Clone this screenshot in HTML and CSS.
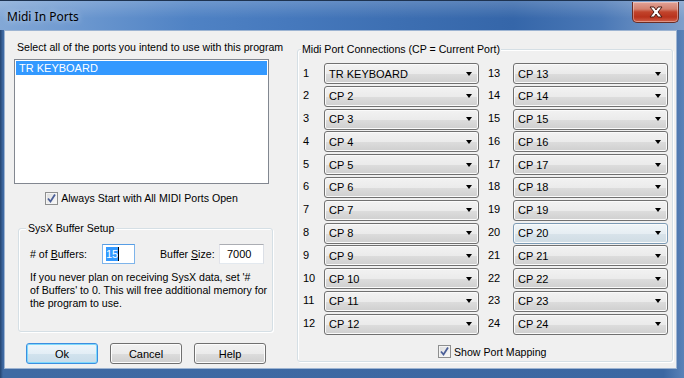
FILE: index.html
```html
<!DOCTYPE html>
<html lang="en">
<head>
  <meta charset="UTF-8" />
  <title>Midi In Ports</title>
  <link rel="stylesheet" href="styles.css">
</head>
<body>

  <div class="window">
    <div class="titlebar">
      <span class="title">Midi In Ports</span>
      <div class="close-btn">
        <svg width="16" height="12" viewBox="0 0 16 12">
          <path d="M2 1h4l2 3 2-3h4l-4 5 4 5h-4l-2-3-2 3H2l4-5z" fill="#fff" stroke="#4a1a12" stroke-width="1" stroke-linejoin="round"/>
        </svg>
      </div>
    </div>

    <div class="client">
      <div class="left-col">
        <div class="hint">Select all of the ports you intend to use with this program</div>
        <div class="listbox">
          <div class="list-item selected">TR KEYBOARD</div>
        </div>
        <div class="check-row">
          <span class="checkbox"><svg width="13" height="13" viewBox="0 0 13 13"><path d="M3 6.5l2.5 3L10 2.5" fill="none" stroke="#4b5f98" stroke-width="1.8"/></svg></span>
          <span>Always Start with All MIDI Ports Open</span>
        </div>

        <div class="group sysx">
          <div class="group-title">SysX Buffer Setup</div>
          <div class="buf-row">
            <span class="buf-label"># of <u>B</u>uffers:</span>
            <span class="textbox focused narrow"><span class="sel">15</span><span class="caret"></span></span>
            <span class="buf-label size-label">Buffer <u>S</u>ize:</span>
            <span class="textbox wide">7000</span>
          </div>
          <p class="note">If you never plan on receiving SysX data, set '#<br>of Buffers' to 0. This will free additional memory for<br>the program to use.</p>
        </div>

        <div class="buttons">
          <button class="default">Ok</button>
          <button>Cancel</button>
          <button>Help</button>
        </div>
      </div>

      <div class="group ports-group">
        <div class="group-title">Midi Port Connections (CP = Current Port)</div>
        <div class="ports">
          <div class="port-col">
            <div class="port"><span class="num">1</span><div class="combo">TR KEYBOARD</div></div>
            <div class="port"><span class="num">2</span><div class="combo">CP 2</div></div>
            <div class="port"><span class="num">3</span><div class="combo">CP 3</div></div>
            <div class="port"><span class="num">4</span><div class="combo">CP 4</div></div>
            <div class="port"><span class="num">5</span><div class="combo">CP 5</div></div>
            <div class="port"><span class="num">6</span><div class="combo">CP 6</div></div>
            <div class="port"><span class="num">7</span><div class="combo">CP 7</div></div>
            <div class="port"><span class="num">8</span><div class="combo">CP 8</div></div>
            <div class="port"><span class="num">9</span><div class="combo">CP 9</div></div>
            <div class="port"><span class="num">10</span><div class="combo">CP 10</div></div>
            <div class="port"><span class="num">11</span><div class="combo">CP 11</div></div>
            <div class="port"><span class="num">12</span><div class="combo">CP 12</div></div>
          </div>
          <div class="port-col second">
            <div class="port"><span class="num">13</span><div class="combo">CP 13</div></div>
            <div class="port"><span class="num">14</span><div class="combo">CP 14</div></div>
            <div class="port"><span class="num">15</span><div class="combo">CP 15</div></div>
            <div class="port"><span class="num">16</span><div class="combo">CP 16</div></div>
            <div class="port"><span class="num">17</span><div class="combo">CP 17</div></div>
            <div class="port"><span class="num">18</span><div class="combo">CP 18</div></div>
            <div class="port"><span class="num">19</span><div class="combo">CP 19</div></div>
            <div class="port"><span class="num">20</span><div class="combo hover">CP 20</div></div>
            <div class="port"><span class="num">21</span><div class="combo">CP 21</div></div>
            <div class="port"><span class="num">22</span><div class="combo">CP 22</div></div>
            <div class="port"><span class="num">23</span><div class="combo">CP 23</div></div>
            <div class="port"><span class="num">24</span><div class="combo">CP 24</div></div>
          </div>
        </div>
        <div class="check-row mapping">
          <span class="checkbox"><svg width="13" height="13" viewBox="0 0 13 13"><path d="M3 6.5l2.5 3L10 2.5" fill="none" stroke="#4b5f98" stroke-width="1.8"/></svg></span>
          <span>Show Port Mapping</span>
        </div>
      </div>
    </div>
  </div>

</body>
</html>
```

FILE: styles.css
```css
body {
  margin: 0;
  padding: 0;
  background: #2b4f7f;
  font-family: "Liberation Sans", Arial, sans-serif;
  font-size: 10.6px;
  color: #000;
}

.window {
  width: 684px;
  height: 378px;
  display: flex;
  flex-direction: column;
  background: linear-gradient(to right, #25446f 0px, #3f6aa3 3px, #3b67a2 97%, #5a82b8 100%);
  overflow: hidden;
}

.titlebar {
  height: 30px;
  display: flex;
  align-items: center;
  justify-content: space-between;
  padding: 0 7px 0 7px;
  border-top: 1px solid #1e3350;
  box-sizing: border-box;
  background:
    linear-gradient(to bottom, rgba(255,255,255,0.18), rgba(255,255,255,0) 60%),
    linear-gradient(to right, #83a8d6 0%, #6b97cf 12%, #4f82c4 28%, #4679bd 42%, #3d6fb2 58%, #3566a9 75%, #4a78b6 88%, #7f9fcb 100%);
}

.title {
  font-family: "Noto Sans", "Liberation Sans", sans-serif;
  font-size: 12px;
  color: #000;
  text-shadow: 0 0 6px rgba(255,255,255,0.7);
  margin-top: 2px;
}

.close-btn {
  width: 45px;
  height: 20px;
  margin-top: -7px;
  margin-right: -2px;
  border: 1px solid #6a2d25;
  border-top: none;
  border-radius: 0 0 5px 5px;
  background: linear-gradient(to bottom, #e2a297 0%, #d3816f 35%, #c1432b 50%, #b8321c 75%, #d0604a 100%);
  box-shadow: inset 0 0 0 1px rgba(255,255,255,0.35);
  display: flex;
  align-items: center;
  justify-content: center;
}

.client {
  margin: 0 7px 0 4px;
  height: 339px;
  background: #f0f0f0;
  border: 1px solid #9db4d2;
  box-sizing: border-box;
  display: flex;
  align-items: flex-start;
  gap: 24px;
}

.left-col {
  width: 259px;
  margin-left: 9px;
  padding-top: 10px;
  display: flex;
  flex-direction: column;
}

.hint {
  line-height: 13px;
  padding-left: 3px;
  white-space: nowrap;
}

.listbox {
  margin-top: 5px;
  width: 255px;
  height: 125px;
  box-sizing: border-box;
  border: 1px solid #828790;
  background: #fff;
  padding: 1px;
}

.list-item {
  height: 14px;
  line-height: 14px;
  padding-left: 3px;
  font-size: 11px;
}

.list-item.selected {
  background: #3399ff;
  color: #fff;
}

.check-row {
  display: flex;
  align-items: center;
  gap: 3px;
  height: 14px;
  line-height: 14px;
  white-space: nowrap;
}

.left-col .check-row {
  margin-top: 7px;
  width: 255px;
  justify-content: center;
}

.checkbox {
  width: 13px;
  height: 13px;
  box-sizing: border-box;
  border: 1px solid #8e8f8f;
  background: linear-gradient(135deg, #dcdcdc, #fbfbfb);
  box-shadow: inset 0 0 0 1px #f4f4f4;
  display: flex;
  align-items: center;
  justify-content: center;
}

.checkbox svg {
  margin: -1px;
}

.group {
  border: 1px solid #d5dfe5;
  border-radius: 3px;
  box-shadow: inset 1px 1px 0 #fff, 1px 1px 0 #fff;
  box-sizing: border-box;
}

.group-title {
  display: inline-block;
  align-self: flex-start;
  background: #f0f0f0;
  line-height: 13px;
  height: 13px;
  margin-top: -7px;
  padding: 0 2px;
  white-space: nowrap;
}

.sysx {
  margin-top: 23px;
  margin-left: 4px;
  width: 255px;
  height: 104px;
  padding-left: 11px;
  display: flex;
  flex-direction: column;
}

.sysx .group-title {
  margin-left: -4px;
}

.buf-row {
  margin-top: 9px;
  display: flex;
  align-items: center;
  height: 20px;
}

.buf-label {
  width: 72px;
  white-space: nowrap;
}

.size-label {
  width: 59px;
  margin-left: 25px;
}

.textbox {
  height: 20px;
  box-sizing: border-box;
  border: 1px solid #abadb3;
  border-color: #abadb3 #dbdfe6 #e3e9ef #e2e3ea;
  background: #fff;
  display: flex;
  align-items: center;
  padding-left: 5px;
  font-size: 11px;
}

.textbox.narrow {
  width: 33px;
}

.textbox.wide {
  width: 45px;
  padding-left: 7px;
}

.textbox.focused {
  border-color: #569de5 #7eb4ea #7eb4ea #7eb4ea;
  padding-left: 3px;
}

.sel {
  background: #3399ff;
  color: #fff;
  line-height: 14px;
}

.caret {
  width: 1px;
  height: 14px;
  background: #000;
}

.note {
  margin: 7px 0 0 0;
  line-height: 13px;
  white-space: nowrap;
}

.buttons {
  margin-top: 11px;
  margin-left: 12px;
  display: flex;
  gap: 12px;
}

button {
  width: 72px;
  height: 21px;
  padding: 0;
  font-family: "Liberation Sans", Arial, sans-serif;
  font-size: 11px;
  color: #000;
  border: 1px solid #707070;
  border-radius: 3px;
  background: linear-gradient(to bottom, #f2f2f2 0%, #ebebeb 50%, #dddddd 51%, #cfcfcf 100%);
  box-shadow: inset 0 0 0 1px #fcfcfc;
}

button.default {
  border-color: #3c8ee0;
  box-shadow: inset 0 0 0 1px #7fd9fb;
  background: linear-gradient(to bottom, #eef6fb 0%, #e3eef6 50%, #d2e3ee 51%, #c8dcea 100%);
}

.ports-group {
  margin-top: 18px;
  width: 376px;
  height: 313px;
  padding-left: 5px;
  display: flex;
  flex-direction: column;
}

.ports-group .group-title {
  margin-left: -2px;
  padding: 0 1px;
}

.ports {
  margin-top: 7px;
  display: flex;
  gap: 9px;
}

.port-col {
  display: flex;
  flex-direction: column;
  gap: 1.8px;
}

.port {
  display: flex;
  align-items: center;
  font-size: 11px;
}

.num {
  width: 21px;
  margin-top: -2px;
}

.second .num {
  width: 25px;
}

.combo {
  width: 155px;
  height: 21px;
  box-sizing: border-box;
  border: 1px solid #707070;
  border-radius: 3px;
  background: linear-gradient(to bottom, #f2f2f2 0%, #ebebeb 50%, #dddddd 51%, #cfcfcf 100%);
  box-shadow: inset 0 0 0 1px #fafafa;
  padding-left: 4px;
  line-height: 20px;
  display: flex;
  justify-content: space-between;
  align-items: center;
}

.combo::after {
  content: "";
  width: 0;
  height: 0;
  border-left: 3.5px solid transparent;
  border-right: 3.5px solid transparent;
  border-top: 4px solid #000;
  margin-right: 6px;
}

.combo.hover {
  border-color: #7c9bb5;
  background: linear-gradient(to bottom, #f0f5f8 0%, #e6eef3 50%, #d8e3ea 51%, #cfdce4 100%);
}

.mapping {
  margin-top: 10px;
  margin-left: 135px;
}
```
